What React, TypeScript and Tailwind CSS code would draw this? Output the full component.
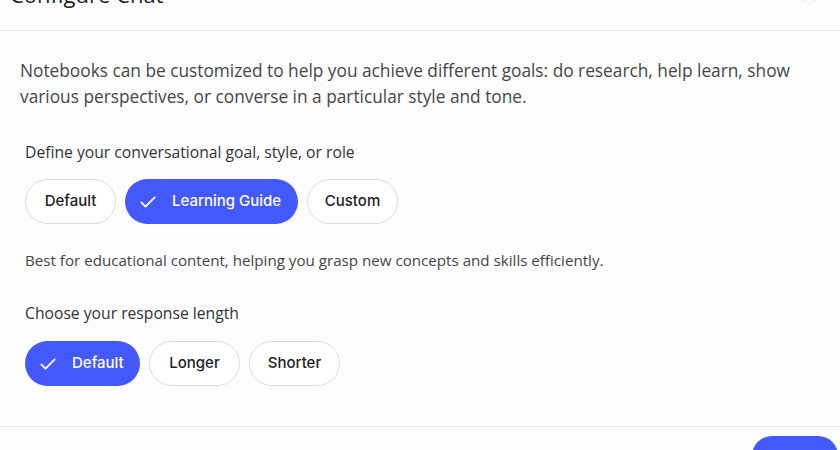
import React from "react";

function Check() {
  return (
    <svg width="20" height="20" viewBox="0 0 24 24" fill="none" stroke="white" strokeWidth="2.2" strokeLinecap="round" strokeLinejoin="round">
      <path d="M4 12.5l5 5L20 6.5" />
    </svg>
  );
}

function Chip({ label, active, w }: { label: string; active?: boolean; w: string }) {
  if (active) {
    return (
      <div className={`h-[45px] ${w} rounded-full bg-[#4459fc] flex items-center pl-[13px] text-white text-[15px] font-medium font-['Inter',sans-serif]`}>
        <Check />
        <span className="ml-[14px]">{label}</span>
      </div>
    );
  }
  return (
    <div className={`h-[45px] ${w} rounded-full border border-[#dcdcdc] bg-white flex items-center justify-center text-[#222] text-[15px] font-medium font-['Inter',sans-serif]`}>
      {label}
    </div>
  );
}

export default function App() {
  return (
    <div className="w-[840px] h-[450px] overflow-hidden bg-[#fdfdfe] relative" style={{ fontFamily: "'Open Sans', 'Noto Sans', sans-serif" }}>
      <div className="h-[31px] border-b border-[#e6e6f0] flex justify-between items-start">
        <div className="ml-[10px] -mt-[20px] text-[22px] leading-[28px] text-[#1f1f1f]">Configure Chat</div>
        <div className="mr-[22px] -mt-[14px] text-[#444] text-[20px] leading-[18px]">✕</div>
      </div>
      <div className="pl-[20px] pr-[30px] pt-[27px]">
        <p className="text-[17.3px] leading-[26px] text-[#444746]">
          Notebooks can be customized to help you achieve different goals: do research, help learn, show various perspectives, or converse in a particular style and tone.
        </p>
        <div className="pl-[5px]">
          <div className="mt-[32px] text-[15.7px] leading-[20px] text-[#333]">Define your conversational goal, style, or role</div>
          <div className="mt-[17px] flex gap-[9px]">
            <Chip label="Default" w="w-[91px]" />
            <Chip label="Learning Guide" active w="w-[173px]" />
            <Chip label="Custom" w="w-[91px]" />
          </div>
          <div className="mt-[26px] text-[15.15px] leading-[20px] text-[#444]">
            Best for educational content, helping you grasp new concepts and skills efficiently.
          </div>
          <div className="mt-[33px] text-[15.7px] leading-[20px] text-[#333]">Choose your response length</div>
          <div className="mt-[18px] flex gap-[9px]">
            <Chip label="Default" active w="w-[115px]" />
            <Chip label="Longer" w="w-[91px]" />
            <Chip label="Shorter" w="w-[91px]" />
          </div>
        </div>
      </div>
      <div className="absolute left-0 right-0 top-[426px] border-t border-[#e8e8f0] flex justify-end pt-[9px] pr-[2px]">
        <div className="w-[86px] h-[40px] rounded-full bg-[#4459fc]" />
      </div>
    </div>
  );
}
